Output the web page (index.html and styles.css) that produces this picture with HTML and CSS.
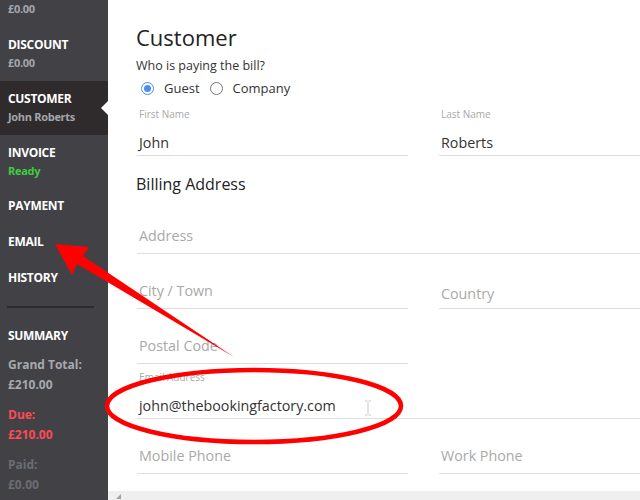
FILE: index.html
```html
<!DOCTYPE html>
<html lang="en">
<head>
<meta charset="utf-8">
<title>Customer</title>
<link rel="stylesheet" href="styles.css">
</head>
<body>
<div class="app">
  <aside class="sidebar">
    <div class="nav-item first"><div class="nav-sub">£0.00</div></div>
    <div class="nav-item"><div class="nav-title">DISCOUNT</div><div class="nav-sub">£0.00</div></div>
    <div class="nav-item active"><div class="nav-title">CUSTOMER</div><div class="nav-sub">John Roberts</div></div>
    <div class="nav-item tight"><div class="nav-title">INVOICE</div><div class="nav-sub ready">Ready</div></div>
    <div class="nav-item"><div class="nav-title">PAYMENT</div></div>
    <div class="nav-item"><div class="nav-title">EMAIL</div></div>
    <div class="nav-item"><div class="nav-title">HISTORY</div></div>
    <div class="divider"></div>
    <div class="summary">
      <div class="nav-title">SUMMARY</div>
      <div class="sum-group"><div>Grand Total:</div><div>£210.00</div></div>
      <div class="sum-group due"><div>Due:</div><div>£210.00</div></div>
      <div class="sum-group paid"><div>Paid:</div><div>£0.00</div></div>
    </div>
  </aside>
  <main class="main">
    <div class="content">
      <h1 class="title">Customer</h1>
      <p class="question">Who is paying the bill?</p>
      <div class="radios">
        <label class="radio"><span class="dot checked"></span>Guest</label>
        <label class="radio"><span class="dot"></span>Company</label>
      </div>
      <div class="form">
        <div class="row two">
          <div class="field"><div class="lbl">First Name</div><div class="val">John</div></div>
          <div class="field"><div class="lbl">Last Name</div><div class="val">Roberts</div></div>
        </div>
        <h2 class="subtitle">Billing Address</h2>
        <div class="row">
          <div class="field"><div class="lbl"></div><div class="val ph">Address</div></div>
        </div>
        <div class="row two">
          <div class="field"><div class="lbl"></div><div class="val ph">City / Town</div></div>
          <div class="field"><div class="lbl"></div><div class="val sel">Country</div></div>
        </div>
        <div class="row two">
          <div class="field"><div class="lbl"></div><div class="val ph">Postal Code</div></div>
        </div>
        <div class="row">
          <div class="field"><div class="lbl">Email Address</div><div class="val">john@thebookingfactory.com</div></div>
        </div>
        <div class="row two">
          <div class="field"><div class="lbl"></div><div class="val ph">Mobile Phone</div></div>
          <div class="field"><div class="lbl"></div><div class="val ph">Work Phone</div></div>
        </div>
      </div>
    </div>
    <div class="hscroll"><span class="arrow"></span></div>
  </main>
  <svg class="cursor" width="8" height="16" viewBox="0 0 8 16"><path d="M1 1h2.5M4.5 1H7M4 1.5v13M1 15h2.5M4.5 15H7" stroke="#c8c8c8" stroke-width="1" fill="none"/></svg>
  <svg class="annot" width="640" height="500" viewBox="0 0 640 500">
    <polygon points="55,244 89,247 83,256 234,357 77,264 72,275" fill="#ff0000"/>
    <ellipse cx="254" cy="406" rx="147" ry="36" fill="none" stroke="#ff0000" stroke-width="4.5"/>
  </svg>
</div>
</body>
</html>
```
FILE: styles.css
```css
* { box-sizing: border-box; }
html, body { margin: 0; padding: 0; }
body { font-family: "Open Sans", "Liberation Sans", sans-serif; background: #fff; }
.app { position: relative; display: flex; width: 640px; height: 500px; overflow: hidden; }

.sidebar { width: 108px; flex: none; background: #424146; color: #fff; }
.nav-item { position: relative; padding: 9px 0 9px 8px; }
.nav-item.first { padding-top: 0; padding-bottom: 9px; }
.nav-item.tight { padding-bottom: 8px; }
.nav-title { font-size: 12px; font-weight: 700; line-height: 18px; color: #fff; letter-spacing: -0.3px; }
.nav-sub { font-size: 11px; font-weight: 700; line-height: 18px; color: #a3a6ac; letter-spacing: -0.3px; }
.nav-sub.ready { color: #3fcc3f; }
.nav-item.active { background: #2f2b2c; }
.nav-item.active::after {
  content: ""; position: absolute; right: 0; top: 20px;
  border-style: solid; border-width: 7px 7px 7px 0;
  border-color: transparent #fff transparent transparent;
}
.divider { height: 2px; background: #2f2b2c; margin: 10px 14px 19px 7px; }
.summary { padding-left: 8px; }
.sum-group { font-size: 12px; font-weight: 700; line-height: 20px; color: #a6a9ae; margin-top: 10px; }
.sum-group:first-of-type { margin-top: 8px; }
.sum-group.due { color: #ff4a57; }
.sum-group.paid { color: #6b6d73; }

.main { flex: 1; display: flex; flex-direction: column; min-width: 0; }
.content { flex: 1; overflow: hidden; padding: 22px 0 0 28px; color: #333; }
.title { margin: 0; font-size: 22px; font-weight: 400; line-height: 30px; color: #222; }
.question { margin: 5px 0 0; font-size: 12.5px; line-height: 18px; color: #333; }
.radios { display: flex; align-items: center; margin: 3px 0 0 5px; height: 20px; font-size: 13px; color: #333; }
.radio { display: flex; align-items: center; margin-right: 10px; }
.dot { width: 13px; height: 13px; border-radius: 50%; border: 1px solid #777; margin-right: 10px; position: relative; }
.dot.checked { border-color: #4a90f0; }
.dot.checked::after { content: ""; position: absolute; left: 2px; top: 2px; width: 7px; height: 7px; border-radius: 50%; background: #4a8ef5; }

.form { margin: 3px 0 0 1px; width: 573px; }
.row { display: grid; grid-template-columns: 1fr; }
.row.two { grid-template-columns: 271px 271px; column-gap: 31px; }
.field { height: 55px; padding: 6px 0 0 2px; border-bottom: 1px solid #dedede; }
.lbl { height: 14px; font-size: 10px; line-height: 14px; color: #a8a8a8; }
.val { margin-top: 12px; height: 20px; font-size: 14.3px; line-height: 20px; color: #333; white-space: nowrap; }
.val.ph { margin-top: 7px; color: #a9a9a9; }
.val.sel { margin-top: 10px; color: #a9a9a9; }
.subtitle { margin: 16px 0 3px -1px; font-size: 16px; font-weight: 400; line-height: 24px; color: #222; }

.hscroll { height: 9px; background: #efefef; position: relative; flex: none; }
.arrow { position: absolute; left: 8px; top: 3px; border-style: solid; border-width: 0 0 5px 5px; border-color: transparent transparent #a0a0a0 transparent; }

.cursor { position: absolute; left: 364px; top: 400px; }
.annot { position: absolute; left: 0; top: 0; pointer-events: none; }
```
